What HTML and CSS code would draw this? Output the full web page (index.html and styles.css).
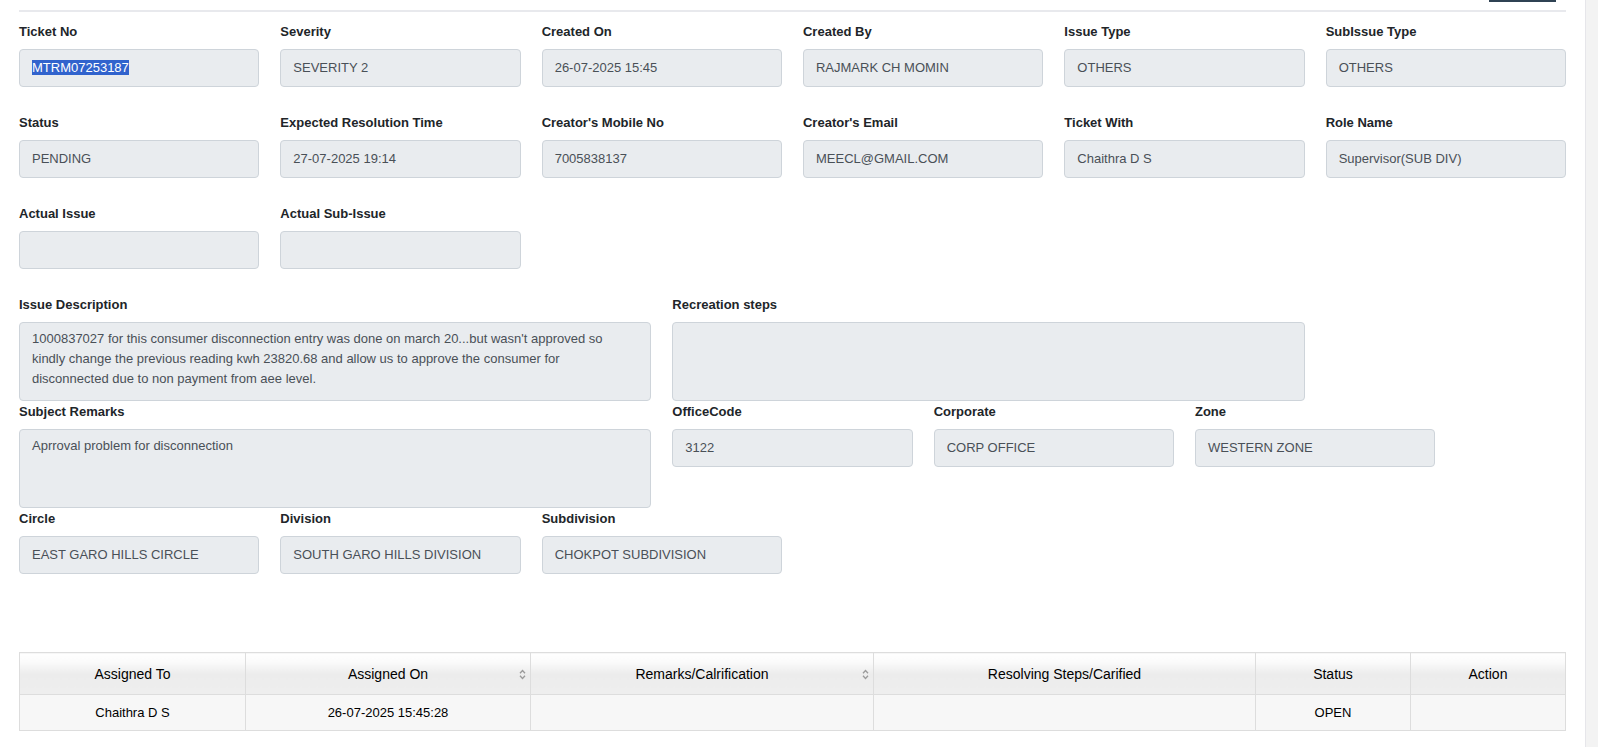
FILE: index.html
```html
<!DOCTYPE html>
<html lang="en">
<head>
    <meta charset="UTF-8">
    <meta name="viewport" content="width=device-width, initial-scale=1.0">
    <title>Ticket Details</title>
    <link rel="stylesheet" href="styles.css">
</head>
<body>
    <div class="page">
        <main class="content">
            <div class="toolbar"><span class="btn-edge"></span></div>
            <div class="divider"></div>

            <div class="form-grid">
                <div class="field">
                    <label>Ticket No</label>
                    <div class="input"><span class="selected">MTRM07253187</span></div>
                </div>
                <div class="field">
                    <label>Severity</label>
                    <div class="input">SEVERITY 2</div>
                </div>
                <div class="field">
                    <label>Created On</label>
                    <div class="input">26-07-2025 15:45</div>
                </div>
                <div class="field">
                    <label>Created By</label>
                    <div class="input">RAJMARK CH MOMIN</div>
                </div>
                <div class="field">
                    <label>Issue Type</label>
                    <div class="input">OTHERS</div>
                </div>
                <div class="field">
                    <label>SubIssue Type</label>
                    <div class="input">OTHERS</div>
                </div>

                <div class="field">
                    <label>Status</label>
                    <div class="input">PENDING</div>
                </div>
                <div class="field">
                    <label>Expected Resolution Time</label>
                    <div class="input">27-07-2025 19:14</div>
                </div>
                <div class="field">
                    <label>Creator's Mobile No</label>
                    <div class="input">7005838137</div>
                </div>
                <div class="field">
                    <label>Creator's Email</label>
                    <div class="input">MEECL@GMAIL.COM</div>
                </div>
                <div class="field">
                    <label>Ticket With</label>
                    <div class="input">Chaithra D S</div>
                </div>
                <div class="field">
                    <label>Role Name</label>
                    <div class="input">Supervisor(SUB DIV)</div>
                </div>

                <div class="field">
                    <label>Actual Issue</label>
                    <div class="input"></div>
                </div>
                <div class="field">
                    <label>Actual Sub-Issue</label>
                    <div class="input"></div>
                </div>

                <div class="field wide new-row area">
                    <label>Issue Description</label>
                    <div class="input textarea">1000837027 for this consumer disconnection entry was done on march 20...but wasn't approved so kindly change the previous reading kwh 23820.68 and allow us to approve the consumer for disconnected due to non payment from aee level.</div>
                </div>
                <div class="field wide area">
                    <label>Recreation steps</label>
                    <div class="input textarea"></div>
                </div>

                <div class="field wide area">
                    <label>Subject Remarks</label>
                    <div class="input textarea">Aprroval problem for disconnection</div>
                </div>
                <div class="field">
                    <label>OfficeCode</label>
                    <div class="input">3122</div>
                </div>
                <div class="field">
                    <label>Corporate</label>
                    <div class="input">CORP OFFICE</div>
                </div>
                <div class="field">
                    <label>Zone</label>
                    <div class="input">WESTERN ZONE</div>
                </div>

                <div class="field">
                    <label>Circle</label>
                    <div class="input">EAST GARO HILLS CIRCLE</div>
                </div>
                <div class="field">
                    <label>Division</label>
                    <div class="input">SOUTH GARO HILLS DIVISION</div>
                </div>
                <div class="field">
                    <label>Subdivision</label>
                    <div class="input">CHOKPOT SUBDIVISION</div>
                </div>
            </div>

            <table class="history">
                <thead>
                    <tr>
                        <th class="col-to">Assigned To</th>
                        <th class="col-on sortable">Assigned On
                            <svg class="sort-icon" width="7" height="11" viewBox="0 0 7 11"><path d="M1 4.2 L3.5 1.5 L6 4.2 M1 6.8 L3.5 9.5 L6 6.8" fill="none" stroke="#9a9a9a" stroke-width="1.3"/></svg>
                        </th>
                        <th class="col-remarks sortable">Remarks/Calrification
                            <svg class="sort-icon" width="7" height="11" viewBox="0 0 7 11"><path d="M1 4.2 L3.5 1.5 L6 4.2 M1 6.8 L3.5 9.5 L6 6.8" fill="none" stroke="#9a9a9a" stroke-width="1.3"/></svg>
                        </th>
                        <th class="col-steps">Resolving Steps/Carified</th>
                        <th class="col-status">Status</th>
                        <th class="col-action">Action</th>
                    </tr>
                </thead>
                <tbody>
                    <tr>
                        <td>Chaithra D S</td>
                        <td>26-07-2025 15:45:28</td>
                        <td></td>
                        <td></td>
                        <td>OPEN</td>
                        <td></td>
                    </tr>
                </tbody>
            </table>
        </main>
        <div class="scroll-track"></div>
    </div>
</body>
</html>
```

FILE: styles.css
```css
html, body {
    margin: 0;
    height: 100%;
}
body {
    font-family: "Liberation Sans", Arial, sans-serif;
    font-size: 13px;
    color: #212529;
    background-color: #ffffff;
}
.page {
    display: flex;
    height: 100%;
    overflow: hidden;
}
.content {
    flex: 1;
    padding: 0 19px 0 19px;
}
.scroll-track {
    width: 12px;
    background-color: #f3f3f3;
    border-left: 1px solid #e6e6ea;
}
.toolbar {
    height: 10px;
    display: flex;
    justify-content: flex-end;
}
.btn-edge {
    width: 67px;
    height: 2px;
    margin-right: 10px;
    background-color: #2f4253;
}
.divider {
    height: 2px;
    background-color: #e8e9ed;
}
.form-grid {
    display: grid;
    grid-template-columns: repeat(12, 1fr);
    column-gap: 21px;
    margin-top: 9px;
}
.field {
    grid-column: span 2;
    margin-bottom: 25px;
}
.field.wide {
    grid-column: span 5;
}
.field.new-row {
    grid-column: 1 / span 5;
}
.field.area {
    margin-bottom: 0;
}
label {
    display: block;
    font-weight: bold;
    font-size: 13px;
    line-height: 20px;
    padding-top: 1px;
    margin-bottom: 7px;
    color: #212529;
}
.input {
    box-sizing: border-box;
    height: 38px;
    padding: 6px 12px;
    line-height: 24px;
    font-size: 13px;
    color: #495057;
    background-color: #e9ecef;
    border: 1px solid #ced4da;
    border-radius: 4px;
    white-space: nowrap;
    overflow: hidden;
}
.input.textarea {
    height: 79px;
    line-height: 20px;
    white-space: normal;
}
.selected {
    background-color: #3163cd;
    color: #ffffff;
}
.history {
    width: 100%;
    margin-top: 53px;
    border-collapse: collapse;
    table-layout: fixed;
    border: 1px solid #dddddd;
    color: #000000;
}
.history th {
    position: relative;
    box-sizing: border-box;
    height: 42px;
    padding: 0 10px;
    font-weight: normal;
    font-size: 14px;
    text-align: center;
    border: 1px solid #dddddd;
    background: linear-gradient(#ffffff 0%, #fbfbfb 20%, #ececec 50%, #eeeeee 100%);
}
.history td {
    height: 35px;
    padding: 0 10px;
    font-size: 13px;
    text-align: center;
    border: 1px solid #dddddd;
    background-color: #f7f7f7;
}
.col-to { width: 226px; }
.col-on { width: 285px; }
.col-remarks { width: 343px; }
.col-steps { width: 382px; }
.col-status { width: 155px; }
.sort-icon {
    position: absolute;
    right: 4px;
    top: 16px;
}
```
